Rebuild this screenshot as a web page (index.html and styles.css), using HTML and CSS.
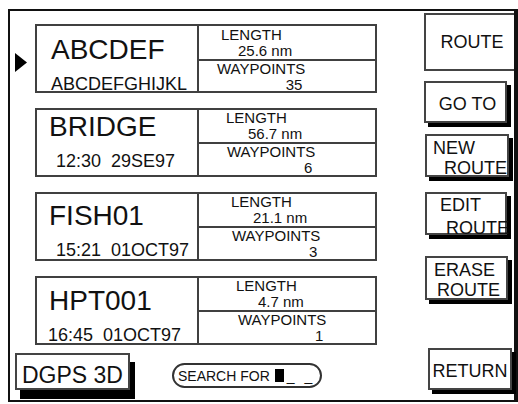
FILE: index.html
```html
<!DOCTYPE html>
<html lang="en">
<head>
    <meta charset="UTF-8">
    <meta name="viewport" content="width=device-width, initial-scale=1.0">
    <title>Route List</title>
    <link rel="stylesheet" href="styles.css">
</head>
<body>
    <div class="screen">
        <div class="main">
            <div class="route-list">
                <div class="route-row">
                    <div class="marker">
                        <svg width="12" height="19" viewBox="0 0 12 19"><polygon points="0,0 12,9.5 0,19" fill="#000"/></svg>
                    </div>
                    <div class="route">
                        <div class="route-name">
                            <div class="name">ABCDEF</div>
                            <div class="comment">ABCDEFGHIJKL</div>
                        </div>
                        <div class="stats">
                            <div class="stats-top">
                                <div>LENGTH</div>
                                <div class="value">25.6 nm</div>
                            </div>
                            <div class="stats-bottom">
                                <div class="wpt">
                                    <div>WAYPOINTS</div>
                                    <div class="count">35</div>
                                </div>
                            </div>
                        </div>
                    </div>
                </div>
                <div class="route-row">
                    <div class="marker"></div>
                    <div class="route">
                        <div class="route-name">
                            <div class="name">BRIDGE</div>
                            <div class="comment">12:30  29SE97</div>
                        </div>
                        <div class="stats">
                            <div class="stats-top">
                                <div>LENGTH</div>
                                <div class="value">56.7 nm</div>
                            </div>
                            <div class="stats-bottom">
                                <div class="wpt">
                                    <div>WAYPOINTS</div>
                                    <div class="count">6</div>
                                </div>
                            </div>
                        </div>
                    </div>
                </div>
                <div class="route-row">
                    <div class="marker"></div>
                    <div class="route">
                        <div class="route-name">
                            <div class="name">FISH01</div>
                            <div class="comment">15:21  01OCT97</div>
                        </div>
                        <div class="stats">
                            <div class="stats-top">
                                <div>LENGTH</div>
                                <div class="value">21.1 nm</div>
                            </div>
                            <div class="stats-bottom">
                                <div class="wpt">
                                    <div>WAYPOINTS</div>
                                    <div class="count">3</div>
                                </div>
                            </div>
                        </div>
                    </div>
                </div>
                <div class="route-row">
                    <div class="marker"></div>
                    <div class="route">
                        <div class="route-name">
                            <div class="name">HPT001</div>
                            <div class="comment">16:45  01OCT97</div>
                        </div>
                        <div class="stats">
                            <div class="stats-top">
                                <div>LENGTH</div>
                                <div class="value">4.7 nm</div>
                            </div>
                            <div class="stats-bottom">
                                <div class="wpt">
                                    <div>WAYPOINTS</div>
                                    <div class="count">1</div>
                                </div>
                            </div>
                        </div>
                    </div>
                </div>
            </div>

            <div class="status-bar">
                <div class="fix-box">DGPS 3D</div>
                <div class="search">SEARCH FOR<span class="cursor"></span><span class="blanks">_ _</span></div>
            </div>
        </div>

        <div class="menu">
            <div class="menu-title">ROUTE</div>
            <div class="key key-goto">GO TO</div>
            <div class="key key-two key-new"><span>NEW</span><span>ROUTE</span></div>
            <div class="key key-two key-edit"><span>EDIT</span><span>ROUTE</span></div>
            <div class="key key-two key-erase"><span>ERASE</span><span>ROUTE</span></div>
            <div class="key key-return">RETURN</div>
        </div>
    </div>
</body>
</html>
```

FILE: styles.css
```css
body {
    margin: 0;
    background-color: #fff;
    color: #111;
    font-family: "Liberation Sans", Arial, sans-serif;
}
.screen {
    box-sizing: border-box;
    display: flex;
    width: 510px;
    height: 393px;
    margin: 9px 0 0 8px;
    border: 2px solid #111;
    border-right-width: 4px;
}

/* left side: route list + status bar */
.main {
    width: 414px;
    padding-top: 13px;
    display: flex;
    flex-direction: column;
}
.route-list {
    display: flex;
    flex-direction: column;
    gap: 15px;
}
.route-row {
    display: flex;
}
.marker {
    width: 20px;
    padding: 29px 0 0 5px;
}
.route {
    box-sizing: border-box;
    display: flex;
    width: 342px;
    height: 69px;
    border: 2px solid #404040;
}
.route-name {
    width: 160px;
    padding-left: 12px;
    box-sizing: border-box;
}
.name {
    font-size: 28px;
    line-height: 30px;
}
.comment {
    margin-top: 9px;
    font-size: 18px;
    line-height: 20px;
    white-space: pre;
}
.stats {
    flex: 1;
    display: flex;
    flex-direction: column;
    border-left: 2px solid #404040;
    font-size: 15px;
    line-height: 16px;
}
.stats-top {
    height: 33px;
    border-bottom: 2px solid #404040;
    padding-left: 27px;
}
.stats-top .value {
    padding-left: 22px;
}
.stats-bottom {
    padding-left: 28px;
}
.wpt {
    display: inline-block;
}
.count {
    text-align: right;
    padding-right: 3px;
}

/* each row sits a little further to the right */
.route-row:nth-child(1) .route-name { padding-top: 9px; padding-left: 14px; }
.route-row:nth-child(1) .stats-top { padding-top: 1px; padding-left: 22px; }
.route-row:nth-child(1) .stats-top .value { padding-left: 17px; }
.route-row:nth-child(1) .stats-bottom { padding-left: 18px; }

.route-row:nth-child(2) .route-name { padding-top: 2px; }
.route-row:nth-child(2) .comment { padding-left: 7px; }

.route-row:nth-child(3) .route-name { padding-top: 7px; }
.route-row:nth-child(3) .comment { padding-left: 7px; }
.route-row:nth-child(3) .stats-top { padding-left: 32px; }
.route-row:nth-child(3) .stats-bottom { padding-left: 33px; }

.route-row:nth-child(4) .route-name { padding-top: 8px; }
.route-row:nth-child(4) .comment { margin-left: -1px; }
.route-row:nth-child(4) .stats-top { padding-left: 37px; }
.route-row:nth-child(4) .stats-bottom { padding-left: 39px; }

.status-bar {
    display: flex;
    align-items: flex-start;
    margin-top: 8px;
}
.fix-box {
    box-sizing: border-box;
    width: 115px;
    height: 37px;
    margin-left: 5px;
    padding-top: 7px;
    border: 2px solid #444;
    box-shadow: 5px 9px 0 #000;
    font-size: 23px;
    line-height: 27px;
    text-align: center;
}
.search {
    box-sizing: border-box;
    display: flex;
    align-items: center;
    width: 150px;
    height: 25px;
    margin: 10px 0 0 42px;
    padding-left: 4px;
    border: 2px solid #333;
    border-radius: 13px;
    font-size: 14px;
}
.cursor {
    display: inline-block;
    width: 9px;
    height: 13px;
    margin-left: 5px;
    background-color: #000;
}
.blanks {
    margin-left: 3px;
    letter-spacing: 3px;
    white-space: pre;
}

/* right side: soft keys */
.menu {
    flex: 1;
    display: flex;
    flex-direction: column;
    align-items: flex-start;
    padding-top: 2px;
    font-size: 18px;
}
.menu-title {
    box-sizing: border-box;
    width: 100%;
    height: 58px;
    border: 2px solid #444;
    border-right: none;
    line-height: 54px;
    text-align: center;
    padding-left: 4px;
}
.key {
    box-sizing: border-box;
    width: 83px;
    height: 43px;
    border: 2px solid #444;
    background-color: #fff;
    box-shadow: 4px 4px 0 #000;
}
.key-goto,
.key-return {
    height: 42px;
    padding-top: 5px;
    line-height: 33px;
    text-align: center;
}
.key-goto {
    margin-top: 10px;
    padding-left: 4px;
}
.key-two span {
    display: block;
    line-height: 20px;
    white-space: nowrap;
}
.key-new {
    width: 84px;
    margin: 11px 0 0 1px;
    padding-top: 2px;
}
.key-new span:first-child { padding-left: 6px; }
.key-new span:last-child { padding-left: 17px; }
.key-edit {
    width: 82px;
    margin: 15px 0 0 1px;
    padding-top: 1px;
}
.key-edit span:first-child { padding-left: 13px; }
.key-edit span:last-child { padding-left: 19px; margin-top: 3px; }
.key-erase {
    height: 44px;
    margin: 21px 0 0 1px;
    padding-top: 2px;
}
.key-erase span:first-child { padding-left: 7px; }
.key-erase span:last-child { padding-left: 10px; }
.key-return {
    width: 84px;
    margin: auto 0 10px 4px;
}
```
